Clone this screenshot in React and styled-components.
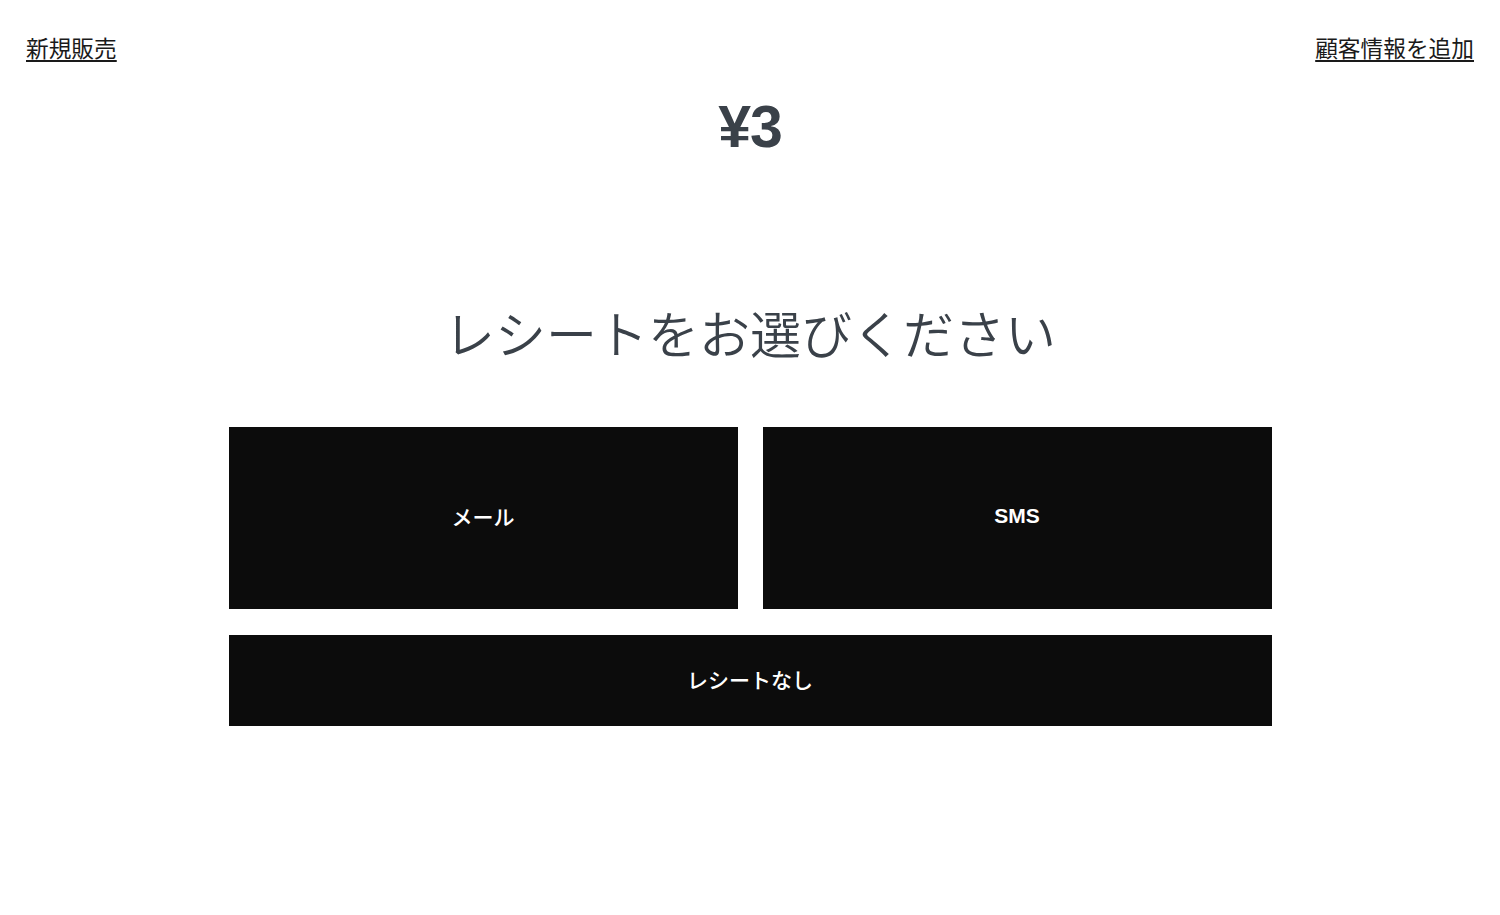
import React from "react";
import styled, { createGlobalStyle } from "styled-components";

const GlobalStyle = createGlobalStyle`
    html, body {
        margin: 0;
        padding: 0;
        background: #ffffff;
        font-family: "Noto Sans CJK JP", "Noto Sans", sans-serif;
    }
`;

const Page = styled.div`
    width: 1500px;
    height: 915px;
    display: flex;
    flex-direction: column;
    align-items: center;
`;

const TopBar = styled.div`
    width: 100%;
    box-sizing: border-box;
    display: flex;
    justify-content: space-between;
    padding: 32px 26px 0;
`;

const TopLink = styled.a`
    font-size: 22.7px;
    line-height: 32px;
    color: #1a1a1a;
    text-decoration: underline;
    text-underline-offset: 3px;
    text-decoration-thickness: 1.5px;
    cursor: pointer;
`;

const Amount = styled.div`
    margin-top: 30px;
    font-family: "Liberation Sans", "Noto Sans", sans-serif;
    font-size: 59px;
    font-weight: 700;
    line-height: 66px;
    letter-spacing: -1px;
    color: #3a4149;
`;

const Title = styled.h1`
    margin: 136px 0 0;
    font-size: 51px;
    font-weight: 350;
    line-height: 72px;
    color: #3a4149;
`;

const Options = styled.div`
    margin-top: 59px;
    width: 1043px;
    display: grid;
    grid-template-columns: 1fr 1fr;
    gap: 26px 25px;
`;

const OptionButton = styled.button`
    grid-column: ${(p) => (p.$wide ? "1 / span 2" : "auto")};
    height: ${(p) => (p.$wide ? "91px" : "182px")};
    padding: 0 0 4px;
    border: none;
    background: #0c0c0c;
    color: #ffffff;
    font-family: ${(p) =>
        p.$latin ? '"Liberation Sans", sans-serif' : '"Noto Sans CJK JP", sans-serif'};
    font-size: 21px;
    font-weight: ${(p) => (p.$latin ? 700 : 500)};
    cursor: pointer;
`;

const App = () => {
    return (
        <Page>
            <GlobalStyle />
            <TopBar>
                <TopLink>新規販売</TopLink>
                <TopLink>顧客情報を追加</TopLink>
            </TopBar>
            <Amount>¥3</Amount>
            <Title>レシートをお選びください</Title>
            <Options>
                <OptionButton>メール</OptionButton>
                <OptionButton $latin>SMS</OptionButton>
                <OptionButton $wide>レシートなし</OptionButton>
            </Options>
        </Page>
    );
};

export default App;
